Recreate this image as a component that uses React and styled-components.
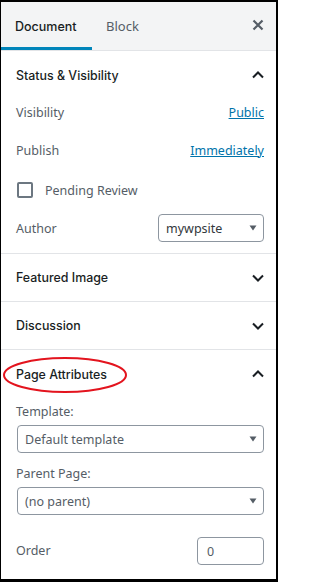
import React from 'react';
import styled, { createGlobalStyle } from 'styled-components';

const GlobalStyle = createGlobalStyle`
  html, body {
    margin: 0;
    padding: 0;
    background: #fff;
  }
  body {
    font-family: "Noto Sans", "Open Sans", Arial, sans-serif;
    font-size: 12.5px;
    color: #191e23;
  }
`;

const Frame = styled.div`
  position: relative;
  width: 278px;
  height: 582px;
  box-sizing: border-box;
  border-style: solid;
  border-color: #000;
  border-width: 2px 2px 3px 1px;
  overflow: hidden;
  background: #fff;
`;

const TabBar = styled.div`
  display: flex;
  align-items: stretch;
  height: 48px;
  background: #f3f4f5;
  border-bottom: 1px solid #e2e4e7;
`;

const Tab = styled.div`
  display: flex;
  align-items: center;
  box-sizing: border-box;
  width: ${p => p.$w}px;
  padding-left: 14px;
  padding-top: 3px;
  font-family: ${p => (p.$active ? '"Inter", "Noto Sans", sans-serif' : 'inherit')};
  font-size: ${p => (p.$active ? 12.5 : 13)}px;
  font-weight: ${p => (p.$active ? 500 : 400)};
  color: ${p => (p.$active ? '#191e23' : '#555d66')};
  border-bottom: 3px solid ${p => (p.$active ? '#0085ba' : 'transparent')};
`;

const CloseButton = styled.div`
  margin-left: auto;
  margin-right: 6px;
  width: 24px;
  display: flex;
  align-items: center;
  justify-content: center;
  padding-bottom: 2px;
`;

const Panel = styled.section`
  border-bottom: 1px solid #e2e4e7;
`;

const PanelHeader = styled.div`
  display: flex;
  align-items: center;
  justify-content: space-between;
  height: ${p => p.$h || 48}px;
  padding: 0 6px 0 15px;
  font-family: "Inter", "Noto Sans", sans-serif;
  font-weight: 500;
  font-size: 12.4px;
  color: #191e23;
`;

const PanelBody = styled.div`
  display: flex;
  flex-direction: column;
  padding: 0 12px ${p => p.$pb || 0}px 15px;
`;

const Row = styled.div`
  display: flex;
  align-items: center;
  justify-content: space-between;
  height: ${p => p.$h || 26}px;
  margin-top: ${p => p.$mt || 0}px;
`;

const Label = styled.span`
  color: #555d66;
`;

const FieldLabel = styled.div`
  color: #555d66;
  line-height: 16px;
  margin-top: ${p => p.$mt || 0}px;
`;

const LinkText = styled.a`
  color: #0073aa;
  text-decoration: underline;
  cursor: pointer;
`;

const CheckRow = styled.label`
  display: flex;
  align-items: center;
  gap: 12px;
  height: 26px;
  margin-top: ${p => p.$mt || 0}px;
  color: #555d66;
`;

const CheckBox = styled.span`
  width: 16px;
  height: 16px;
  box-sizing: border-box;
  border: 2px solid #6c7781;
  border-radius: 2px;
  margin-left: 1px;
`;

const Select = styled.div`
  display: flex;
  align-items: center;
  justify-content: space-between;
  box-sizing: border-box;
  width: ${p => (p.$w ? `${p.$w}px` : 'auto')};
  height: 28px;
  margin-top: ${p => p.$mt || 0}px;
  margin-left: ${p => p.$ml || 0}px;
  padding: 0 6px 0 7px;
  border: 1px solid #8d96a0;
  border-radius: 4px;
  color: ${p => p.$color || '#555d66'};
  background: #fff;
`;

const NumberInput = styled.div`
  display: flex;
  align-items: center;
  box-sizing: border-box;
  width: 67px;
  height: 28px;
  margin-top: 2px;
  padding-left: 9px;
  border: 1px solid #8d96a0;
  border-radius: 4px;
  color: #555d66;
`;

const Highlight = styled.svg`
  position: absolute;
  left: 1px;
  top: 353px;
  pointer-events: none;
`;

const Chevron = ({ up }) => (
  <svg width="24" height="24" viewBox="0 0 24 24" aria-hidden="true">
    <path
      fill="none"
      stroke="#191e23"
      strokeWidth="2"
      d={up ? 'M7 14.5l5-5 5 5' : 'M7 9.5l5 5 5-5'}
    />
  </svg>
);

const Caret = () => (
  <svg width="8" height="6" viewBox="0 0 8 6" aria-hidden="true">
    <path d="M0.5 0.5h7L4 5.5z" fill="#555d66" />
  </svg>
);

const CloseIcon = () => (
  <svg width="12" height="12" viewBox="0 0 12 12" aria-hidden="true">
    <path d="M1.5 1.5l9 9M10.5 1.5l-9 9" stroke="#555d66" strokeWidth="2.2" />
  </svg>
);

const App = () => {
  return (
    <>
      <GlobalStyle />
      <Frame>
        <TabBar>
          <Tab $w={91} $active>Document</Tab>
          <Tab $w={60}>Block</Tab>
          <CloseButton>
            <CloseIcon />
          </CloseButton>
        </TabBar>

        <Panel>
          <PanelHeader>
            Status &amp; Visibility
            <Chevron up />
          </PanelHeader>
          <PanelBody $pb={11}>
            <Row>
              <Label>Visibility</Label>
              <LinkText>Public</LinkText>
            </Row>
            <Row $mt={12}>
              <Label>Publish</Label>
              <LinkText>Immediately</LinkText>
            </Row>
            <CheckRow $mt={14}>
              <CheckBox />
              Pending Review
            </CheckRow>
            <Row $h={28} $mt={11}>
              <Label>Author</Label>
              <Select $w={106} $color="#32373c">
                mywpsite
                <Caret />
              </Select>
            </Row>
          </PanelBody>
        </Panel>

        <Panel>
          <PanelHeader $h={47}>
            Featured Image
            <Chevron />
          </PanelHeader>
        </Panel>

        <Panel>
          <PanelHeader $h={47}>
            Discussion
            <Chevron />
          </PanelHeader>
        </Panel>

        <section>
          <PanelHeader>
            Page Attributes
            <Chevron up />
          </PanelHeader>
          <PanelBody>
            <FieldLabel $mt={6}>Template:</FieldLabel>
            <Select $mt={5} $ml={1}>
              Default template
              <Caret />
            </Select>
            <FieldLabel $mt={13}>Parent Page:</FieldLabel>
            <Select $mt={5} $ml={1}>
              (no parent)
              <Caret />
            </Select>
            <Row $h={30} $mt={20}>
              <Label>Order</Label>
              <NumberInput>0</NumberInput>
            </Row>
          </PanelBody>
        </section>

        <Highlight width="128" height="40" viewBox="0 0 128 40">
          <ellipse cx="63" cy="20" rx="61" ry="17" fill="none" stroke="#e3141e" strokeWidth="2" />
        </Highlight>
      </Frame>
    </>
  );
};

export default App;
